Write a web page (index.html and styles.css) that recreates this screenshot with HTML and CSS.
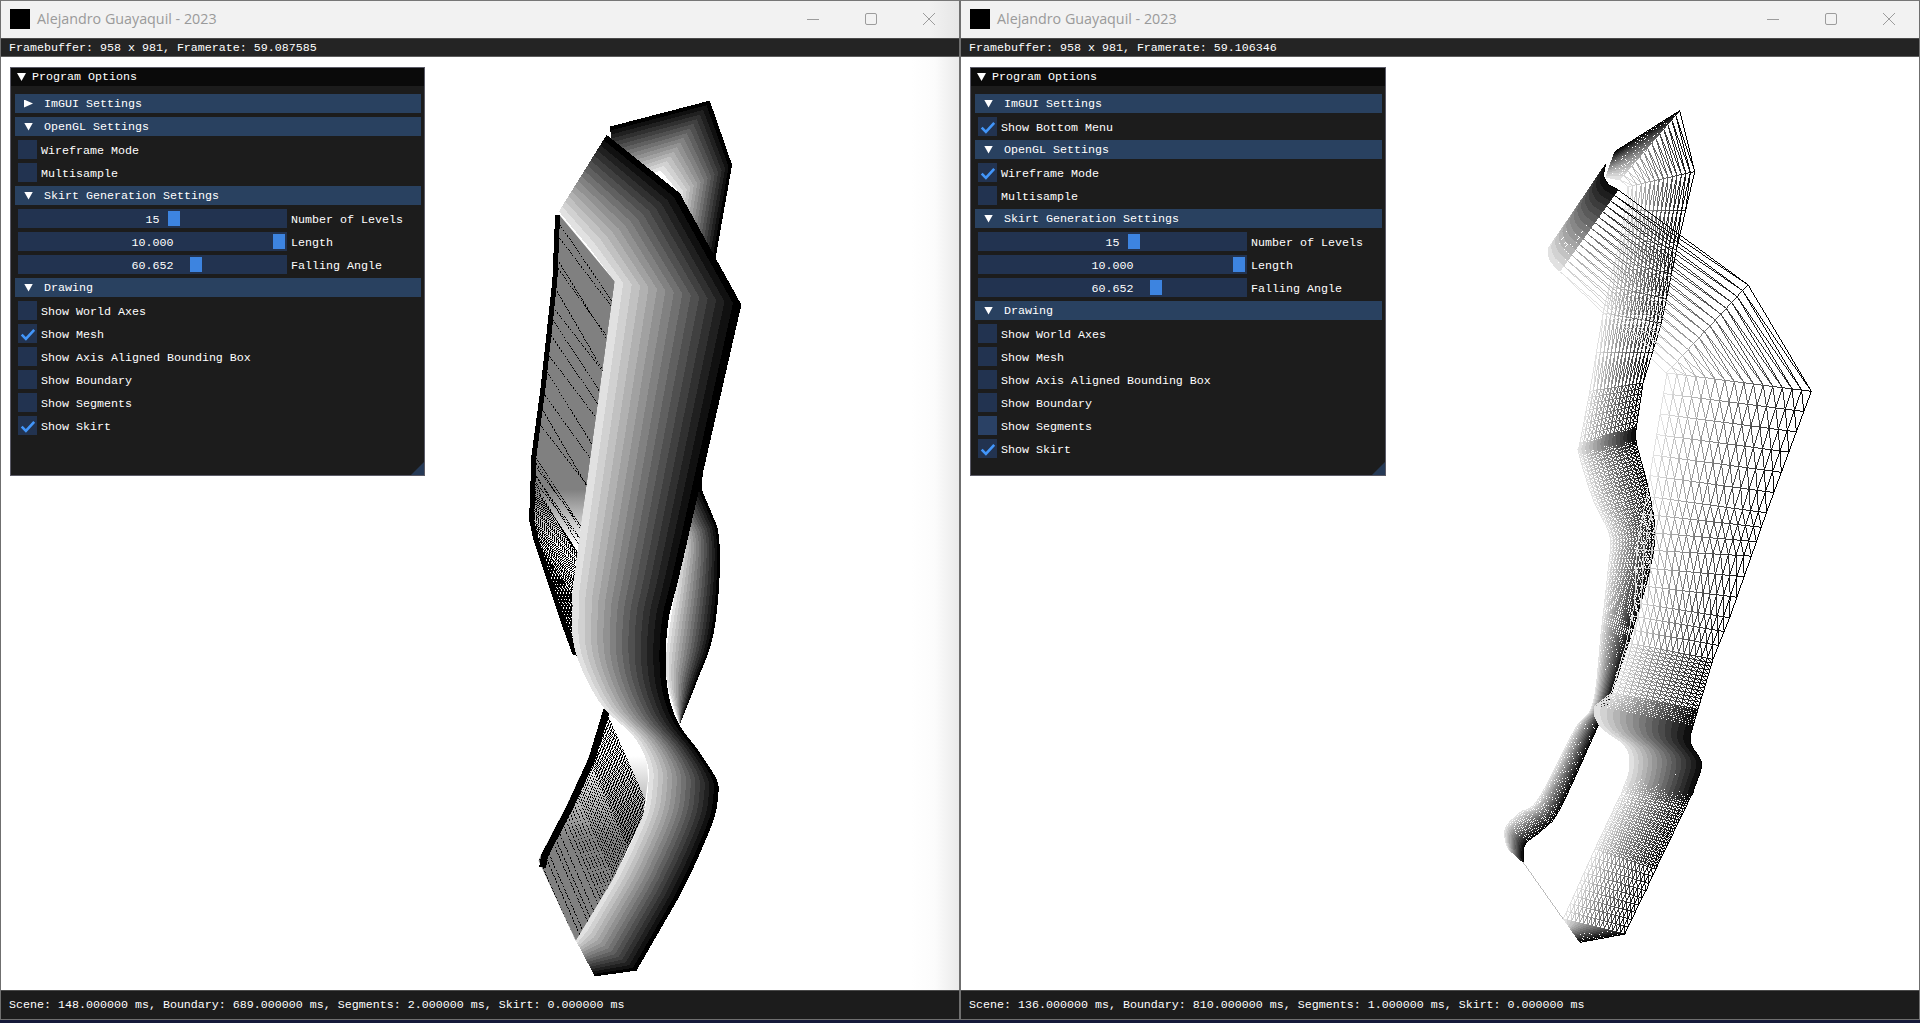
FILE: index.html
```html
<!DOCTYPE html>
<html lang="en">
<head>
<meta charset="utf-8">
<title>Alejandro Guayaquil - 2023</title>
<link rel="stylesheet" href="styles.css">
</head>
<body>
<main class="desktop">
  <section class="win">
    <header class="titlebar titlebar-shadow">
      <span class="app-icon"></span>
      <span class="app-title">Alejandro Guayaquil - 2023</span>
      <div class="caption">
        <span class="cap"><svg width="14" height="14" viewBox="0 0 14 14"><path class="cap-line" d="M1 7.5h12"/></svg></span>
        <span class="cap"><svg width="14" height="14" viewBox="0 0 14 14"><rect class="cap-line" x="1.5" y="1.5" width="11" height="11" rx="1.5"/></svg></span>
        <span class="cap"><svg width="14" height="14" viewBox="0 0 14 14"><path class="cap-line" d="M1 1l12 12M13 1L1 13"/></svg></span>
      </div>
    </header>
    <div class="menubar">Framebuffer: 958 x 981, Framerate: 59.087585</div>
    <div class="viewport viewport-shadow">
      <svg class="scene" id="scene-shaded" viewBox="1 57 958 934"></svg>
      <aside class="panel">
        <div class="panel-title"><i class="tri"></i>Program Options</div>
        <div class="panel-body">
          <div class="head"><i class="tri tri-right"></i>ImGUI Settings</div>
          <div class="head"><i class="tri"></i>OpenGL Settings</div>
          <label class="check"><span class="box"></span>Wireframe Mode</label>
          <label class="check"><span class="box"></span>Multisample</label>
          <div class="head"><i class="tri"></i>Skirt Generation Settings</div>
          <div class="slider-row"><div class="slider">15<b class="grab" style="left:150px"></b></div>Number of Levels</div>
          <div class="slider-row"><div class="slider">10.000<b class="grab" style="left:255px"></b></div>Length</div>
          <div class="slider-row"><div class="slider">60.652<b class="grab" style="left:172px"></b></div>Falling Angle</div>
          <div class="head"><i class="tri"></i>Drawing</div>
          <label class="check"><span class="box"></span>Show World Axes</label>
          <label class="check"><span class="box"><svg class="tick" viewBox="0 0 19 19"><path d="M3.7 10.6l4.2 4.2 8.3-9"/></svg></span>Show Mesh</label>
          <label class="check"><span class="box"></span>Show Axis Aligned Bounding Box</label>
          <label class="check"><span class="box"></span>Show Boundary</label>
          <label class="check"><span class="box"></span>Show Segments</label>
          <label class="check"><span class="box"><svg class="tick" viewBox="0 0 19 19"><path d="M3.7 10.6l4.2 4.2 8.3-9"/></svg></span>Show Skirt</label>
        </div>
        <span class="grip"></span>
      </aside>
    </div>
    <footer class="statusbar">Scene: 148.000000 ms, Boundary: 689.000000 ms, Segments: 2.000000 ms, Skirt: 0.000000 ms</footer>
  </section>

  <section class="win">
    <header class="titlebar">
      <span class="app-icon"></span>
      <span class="app-title">Alejandro Guayaquil - 2023</span>
      <div class="caption">
        <span class="cap"><svg width="14" height="14" viewBox="0 0 14 14"><path class="cap-line" d="M1 7.5h12"/></svg></span>
        <span class="cap"><svg width="14" height="14" viewBox="0 0 14 14"><rect class="cap-line" x="1.5" y="1.5" width="11" height="11" rx="1.5"/></svg></span>
        <span class="cap"><svg width="14" height="14" viewBox="0 0 14 14"><path class="cap-line" d="M1 1l12 12M13 1L1 13"/></svg></span>
      </div>
    </header>
    <div class="menubar">Framebuffer: 958 x 981, Framerate: 59.106346</div>
    <div class="viewport">
      <svg class="scene" id="scene-wire" viewBox="961 57 958 934"></svg>
      <aside class="panel panel-wide">
        <div class="panel-title"><i class="tri"></i>Program Options</div>
        <div class="panel-body">
          <div class="head"><i class="tri"></i>ImGUI Settings</div>
          <label class="check"><span class="box"><svg class="tick" viewBox="0 0 19 19"><path d="M3.7 10.6l4.2 4.2 8.3-9"/></svg></span>Show Bottom Menu</label>
          <div class="head"><i class="tri"></i>OpenGL Settings</div>
          <label class="check"><span class="box"><svg class="tick" viewBox="0 0 19 19"><path d="M3.7 10.6l4.2 4.2 8.3-9"/></svg></span>Wireframe Mode</label>
          <label class="check"><span class="box"></span>Multisample</label>
          <div class="head"><i class="tri"></i>Skirt Generation Settings</div>
          <div class="slider-row"><div class="slider">15<b class="grab" style="left:150px"></b></div>Number of Levels</div>
          <div class="slider-row"><div class="slider">10.000<b class="grab" style="left:255px"></b></div>Length</div>
          <div class="slider-row"><div class="slider">60.652<b class="grab" style="left:172px"></b></div>Falling Angle</div>
          <div class="head"><i class="tri"></i>Drawing</div>
          <label class="check"><span class="box"></span>Show World Axes</label>
          <label class="check"><span class="box"></span>Show Mesh</label>
          <label class="check"><span class="box"></span>Show Axis Aligned Bounding Box</label>
          <label class="check"><span class="box"></span>Show Boundary</label>
          <label class="check"><span class="box box-hover"></span>Show Segments</label>
          <label class="check"><span class="box"><svg class="tick" viewBox="0 0 19 19"><path d="M3.7 10.6l4.2 4.2 8.3-9"/></svg></span>Show Skirt</label>
        </div>
        <span class="grip"></span>
      </aside>
    </div>
    <footer class="statusbar">Scene: 136.000000 ms, Boundary: 810.000000 ms, Segments: 1.000000 ms, Skirt: 0.000000 ms</footer>
  </section>
</main>
<script src="scene.js"></script>
</body>
</html>
```
FILE: styles.css
```css
* { box-sizing: border-box; }
html, body { margin: 0; height: 100%; overflow: hidden; }
body { background: #15193a; }
.desktop {
  display: grid;
  grid-template-columns: 960px 960px;
  height: 1020px;
  font: 11.67px "Liberation Mono", monospace;
  color: #fff;
}
.win {
  display: flex;
  flex-direction: column;
  border: 1px solid #6f6f6f;
  border-top-color: #777;
  min-width: 0;
}
.titlebar {
  display: flex;
  align-items: center;
  height: 37px;
  flex: none;
  padding-left: 9px;
  background: #f2f2f2;
}
.titlebar-shadow {
  background: linear-gradient(to right, rgba(226,226,226,0), #e6e6e6) no-repeat right / 30px 100%, #f2f2f2;
}
.app-icon { width: 20px; height: 20px; background: #000; margin: 0 7px 1px 0; }
.app-title { font: 14.3px "Open Sans", sans-serif; color: #9a9a9a; margin-bottom: 2px; }
.caption { display: flex; margin-left: auto; padding-right: 1px; align-self: flex-start; }
.cap { width: 58px; height: 36px; display: flex; align-items: center; justify-content: center; }
.cap-line { fill: none; stroke: #9c9c9c; stroke-width: 1; }
.menubar {
  flex: none;
  height: 19px;
  padding: 2px 0 0 8px;
  line-height: 15px;
  background: #242424;
  border-top: 1px solid #4a4a4a;
  border-bottom: 1px solid #5c5c5c;
}
.viewport { position: relative; flex: 1; background: #fff; overflow: hidden; }
.viewport-shadow::after {
  content: "";
  position: absolute;
  top: 0; right: 0; bottom: 0;
  width: 48px;
  background: linear-gradient(to right, rgba(225,225,225,0), rgba(225,225,225,.12) 50%, rgba(225,225,225,.7));
}
.scene { position: absolute; inset: 0; width: 100%; height: 100%; display: block; }
.panel {
  position: absolute;
  left: 9px;
  top: 10px;
  width: 415px;
  height: 409px;
  background: #1c1c1c;
  border: 1px solid #5a5a66;
  z-index: 1;
}
.panel-wide { width: 416px; }
.panel-title {
  display: flex;
  align-items: center;
  height: 18px;
  padding-left: 6px;
  background: #0a0a0a;
}
.panel-title .tri { margin-right: 6px; }
.panel-body {
  display: flex;
  flex-direction: column;
  gap: 4px;
  padding: 8px 3px 0 4px;
}
.head {
  display: flex;
  height: 19px;
  line-height: 21px;
  padding-left: 9px;
  background: #294160;
}
.head .tri { margin-right: 11px; align-self: center; }
.tri {
  width: 9px;
  height: 8px;
  flex: none;
  background: #fff;
  clip-path: polygon(0 0, 100% 0, 50% 100%);
}
.tri-right { clip-path: polygon(0 0, 100% 50%, 0 100%); }
.check {
  display: flex;
  gap: 4px;
  height: 19px;
  line-height: 22px;
  padding-left: 3px;
}
.box { width: 19px; height: 19px; background: #223350; flex: none; }
.box-hover { background: #2a4165; }
.tick { display: block; width: 19px; height: 19px; fill: none; stroke: #4296fa; stroke-width: 2.6; }
.slider-row {
  display: flex;
  gap: 4px;
  height: 19px;
  line-height: 22px;
  padding-left: 3px;
}
.slider {
  position: relative;
  width: 269px;
  height: 19px;
  text-align: center;
  background: #223350;
  flex: none;
}
.grab { position: absolute; top: 2px; width: 12px; height: 15px; background: #3d84e0; }
.grip {
  position: absolute;
  right: 0;
  bottom: 0;
  width: 13px;
  height: 13px;
  background: #263a56;
  clip-path: polygon(100% 0, 100% 100%, 0 100%);
}
.statusbar {
  flex: none;
  height: 29px;
  padding: 7px 0 0 8px;
  line-height: 15px;
  background: #1c1c1c;
  border-top: 1px solid #4a4a4a;
}
```
FILE: scene.js
```js
(function () {
  var NS = 'http://www.w3.org/2000/svg';
  function el(parent, name, attrs) {
    var e = document.createElementNS(NS, name);
    for (var k in attrs) e.setAttribute(k, attrs[k]);
    parent.appendChild(e);
    return e;
  }
  function mapper(ox, oy) {
    return function (x, y) { return [ox + x / 3, oy + y / 3]; };
  }
  function cr(a, b, c, d, u) {
    return 0.5 * (2 * b + (c - a) * u + (2 * a - 5 * b + 4 * c - d) * u * u + (3 * b - a - 3 * c + d) * u * u * u);
  }
  // Each control is [Lx, Ly, Rx, Ry, samplesToNext, smooth]
  function rows(ctrl, map) {
    var out = [];
    for (var i = 0; i < ctrl.length; i++) {
      var c = ctrl[i], n = c[4] || 0;
      if (i === ctrl.length - 1) n = 1;
      var d = ctrl[i + 1], p = ctrl[i - 1] || c, q = ctrl[i + 2] || d;
      for (var j = 0; j < (i === ctrl.length - 1 ? 1 : n); j++) {
        var u = j / n, v = [];
        for (var k = 0; k < 4; k++) {
          if (!d) v[k] = c[k];
          else if (c[5] && d[5]) v[k] = cr(p[k], c[k], d[k], q[k], u);
          else v[k] = c[k] + (d[k] - c[k]) * u;
        }
        out.push([map(v[0], v[1]), map(v[2], v[3])]);
      }
    }
    return out;
  }
  var LEVELS = 15;
  function at(r, i) {
    var t = i / LEVELS;
    return [r[0][0] + (r[1][0] - r[0][0]) * t, r[0][1] + (r[1][1] - r[0][1]) * t];
  }
  function gray(v) {
    v = Math.max(0, Math.min(255, Math.round(v)));
    return 'rgb(' + v + ',' + v + ',' + v + ')';
  }
  function bands(svg, ctrl, map, top, blackAt) {
    var rs = rows(ctrl, map);
    for (var i = 0; i < LEVELS; i++) {
      var a = [], b = [];
      rs.forEach(function (r) {
        a.push(at(r, i).join(','));
        b.unshift(at(r, i + 1).join(','));
      });
      el(svg, 'polygon', {
        points: a.concat(b).join(' '),
        fill: gray(top * (1 - i / blackAt)),
        'shape-rendering': 'crispEdges'
      });
    }
  }
  function polyStr(list, map) {
    return list.map(function (p) { return map(p[0], p[1]).join(','); }).join(' ');
  }
  var clipId = 0;
  // The mesh cap fades from flat grey into the bare moire of its densest triangles.
  function hatch(svg, poly, map, grayRange, starts, dir, grayOnTop) {
    var id = 'clip' + (++clipId), gid = 'fade' + clipId;
    var cp = el(svg, 'clipPath', { id: id });
    el(cp, 'polygon', { points: polyStr(poly, map) });
    var y0 = map(0, grayRange[0])[1], y1 = map(0, grayRange[1])[1];
    var lg = el(svg, 'linearGradient', { id: gid, gradientUnits: 'userSpaceOnUse', x1: 0, x2: 0, y1: y0, y2: y1 });
    el(lg, 'stop', { offset: 0, 'stop-color': grayOnTop ? '#808080' : '#fff' });
    el(lg, 'stop', { offset: 1, 'stop-color': grayOnTop ? '#fff' : '#808080' });
    var g = el(svg, 'g', { 'clip-path': 'url(#' + id + ')', 'shape-rendering': 'crispEdges' });
    el(g, 'rect', { x: 0, y: 0, width: 2000, height: 1100, fill: 'url(#' + gid + ')' });
    var d = '', jitter = [0, 0.08, -0.06, 0.04, -0.1, 0.1, -0.03];
    starts.forEach(function (s, i) {
      var dx = dir[0] + (s[2] ? jitter[i % jitter.length] : 0);
      var a = map(s[0], s[1]), b = map(s[0] + dx * 800, s[1] + dir[1] * 800);
      d += 'M' + a[0] + ' ' + a[1] + 'L' + b[0] + ' ' + b[1];
    });
    el(g, 'path', { d: d, fill: 'none', stroke: '#000', 'stroke-width': 1, 'stroke-dasharray': '2 1.5' });
  }
  function along(list, y) {
    for (var i = 0; i < list.length - 1; i++) {
      var a = list[i], b = list[i + 1];
      if (y >= a[1] && y <= b[1]) return a[0] + (b[0] - a[0]) * (y - a[1]) / (b[1] - a[1]);
    }
    return list[list.length - 1][0];
  }

  /* ---------- shaded view ---------- */
  function shaded(svg) {
    var m = mapper(500, 80), D = 1380;
    // back sheet
    bands(svg, [
      [350, 320, 330, 140, 1],
      [482, 272, 630, 62, 1],
      [540, 340, 697, 255, 1],
      [510, 560, 650, 520, 1],
      [450, 1230, 606, 1230, 1],
      [538, D - 10, 652, D - 40, 6, 1],
      [532, D + 110, 660, D + 100, 6, 1],
      [500, D + 340, 640, D + 290, 6, 1],
      [505, D + 440, 590, D + 430, 6, 1],
      [540, D + 556, 540, D + 556, 0, 1]
    ], m, 225, 14);

    // upper mesh panel
    var A = [[178, 405], [170, 600], [135, 920], [107, 1130], [100, 1320], [107, 1380], [150, 1510], [190, 1630], [225, 1725]];
    var B = [[345, 605], [230, 1440], [218, 1580], [240, 1760]];
    var starts = [], y = 430, gaps = [45, 60, 30, 55, 70, 25, 50, 65, 40, 75, 35, 60, 90, 45];
    var gi = 0;
    while (y < 1100) { starts.push([along(A, y) - 34, y - 50, 1]); y += gaps[gi++ % gaps.length]; }
    while (y < 1230) { starts.push([along(A, y) - 34, y - 50, 1]); y += 22 - (y - 1100) / 8; }
    while (y < 1725) { starts.push([along(A, y) - 34, y - 50, 0]); y += 5.2; }
    hatch(svg, A.concat(B.slice().reverse()).concat([[178, 405]]), m, [1230, 1400], starts, [0.68, 1], true);
    el(svg, 'polyline', {
      points: polyStr(A.map(function (p, i) { return [p[0] - 5 + (i > 4 ? 6 : 0), p[1]]; }), m),
      fill: 'none', stroke: '#000', 'stroke-width': 5, 'shape-rendering': 'crispEdges'
    });

    // lower mesh panel
    var P = [[315, 505], [265, 660], [200, 800], [122, 950], [116, 965], [228, 1205], [340, 1020], [430, 830], [445, 720], [440, 660], [400, 590]];
    var Q = P.map(function (p) { return [p[0], p[1] + D]; });
    var s2 = [], t = 0, gapsB = [28, 18, 34, 16, 24];
    var bandLine = [[118, 960 + D], [315, 505 + D]];
    var q = 0;
    while (t < 1) {
      var sx = bandLine[0][0] + (bandLine[1][0] - bandLine[0][0]) * t;
      var sy = bandLine[0][1] + (bandLine[1][1] - bandLine[0][1]) * t;
      s2.push([sx - 40, sy - 90, 0]);
      var gap = t < 0.3 ? gapsB[q++ % 5] : (t < 0.5 ? 14 : (t < 0.7 ? 8 : 4.5));
      t += gap / 500;
    }
    hatch(svg, Q, m, [650 + D, 900 + D], s2, [0.44, 1], false);
    el(svg, 'polyline', {
      points: polyStr([[323, 505 + D], [276, 660 + D], [212, 800 + D], [134, 950 + D], [128, 985 + D]], m),
      fill: 'none', stroke: '#000', 'stroke-width': 7, 'shape-rendering': 'crispEdges'
    });

    // front sheet
    bands(svg, [
      [177, 395, 320, 165, 1],
      [265, 500, 540, 340, 1],
      [345, 605, 725, 675, 1],
      [230, 1440, 550, 1440, 5, 1],
      [218, D + 200, 505, D + 250, 6, 1],
      [226, D + 335, 500, D + 420, 6, 1],
      [300, D + 490, 530, D + 540, 6, 1],
      [400, D + 590, 600, D + 640, 6, 1],
      [442, D + 670, 650, D + 720, 6, 1],
      [445, D + 740, 655, D + 770, 6, 1],
      [425, D + 840, 635, D + 860, 6, 1],
      [340, D + 1020, 540, D + 1070, 6, 1],
      [250, D + 1170, 410, D + 1295, 2],
      [228, D + 1205, 285, D + 1312, 0]
    ], m, 225, 14);
  }

  /* ---------- wireframe view ---------- */
  function wire(svg) {
    var m = mapper(1480, 90), D = 1320;
    function mesh(ctrl) {
      var rs = rows(ctrl, m), paths = [];
      for (var i = 0; i <= LEVELS; i++) paths[i] = '';
      function seg(i, a, b) {
        paths[i] += 'M' + a[0].toFixed(1) + ' ' + a[1].toFixed(1) + 'L' + b[0].toFixed(1) + ' ' + b[1].toFixed(1);
      }
      for (var s = 0; s < rs.length; s++) {
        for (var l = 0; l <= LEVELS; l++) {
          if (s < rs.length - 1) seg(l, at(rs[s], l), at(rs[s + 1], l));
          if (l < LEVELS) {
            seg(l, at(rs[s], l), at(rs[s], l + 1));
            if (s < rs.length - 1) seg(l, at(rs[s], l), at(rs[s + 1], l + 1));
          }
        }
      }
      paths.forEach(function (d, i) {
        el(svg, 'path', {
          d: d, fill: 'none', stroke: gray(225 * (1 - i / LEVELS)),
          'stroke-width': 1, 'shape-rendering': 'crispEdges'
        });
      });
    }
    // back sheet
    mesh([
      [378, 262, 405, 185, 8],
      [420, 270, 600, 62, 1],
      [445, 290, 645, 245, 2],
      [425, 430, 590, 480, 3],
      [370, 670, 545, 700, 2],
      [330, 905, 490, 880, 8],
      [300, 1060, 470, 1010, 14, 1],
      [298, 1095, 470, 1060, 12, 1],
      [340, 1230, 505, 1195, 10, 1],
      [390, D + 20, 525, D, 8, 1],
      [385, D + 120, 510, D + 120, 15, 1],
      [365, D + 300, 450, D + 330, 22, 1],
      [340, D + 520, 385, D + 520, 8, 1],
      [285, D + 600, 350, D + 600, 18, 1],
      [175, D + 810, 240, D + 840, 6, 1],
      [120, D + 850, 190, D + 900, 6, 1],
      [80, D + 890, 140, D + 940, 8, 1],
      [75, D + 925, 130, D + 970, 8, 1],
      [85, D + 960, 130, D + 1000, 0, 1]
    ]);
    el(svg, 'polyline', {
      points: polyStr([[130, D + 1000], [250, D + 1170]], m),
      fill: 'none', stroke: '#bbb', 'stroke-width': 1, 'shape-rendering': 'crispEdges'
    });
    // front sheet
    mesh([
      [230, 440, 378, 222, 10, 1],
      [205, 480, 372, 258, 14, 1],
      [215, 520, 388, 285, 12, 1],
      [240, 545, 415, 300, 1],
      [560, 850, 805, 585, 1],
      [562, 850, 995, 905, 6],
      [500, 1220, 860, 1270, 3],
      [470, D + 60, 815, D + 80, 3],
      [465, D + 220, 750, D + 265, 3],
      [440, D + 340, 700, D + 390, 14],
      [395, D + 490, 655, D + 540, 10],
      [345, D + 530, 640, D + 590, 25, 1],
      [360, D + 590, 632, D + 640, 25, 1],
      [435, D + 650, 665, D + 700, 20, 1],
      [450, D + 710, 650, D + 760, 20, 1],
      [425, D + 790, 620, D + 830, 22, 1],
      [345, D + 960, 528, D + 1020, 9],
      [250, D + 1170, 435, D + 1215, 14],
      [262, D + 1185, 300, D + 1240, 0]
    ]);
  }

  shaded(document.getElementById('scene-shaded'));
  wire(document.getElementById('scene-wire'));
})();
```
